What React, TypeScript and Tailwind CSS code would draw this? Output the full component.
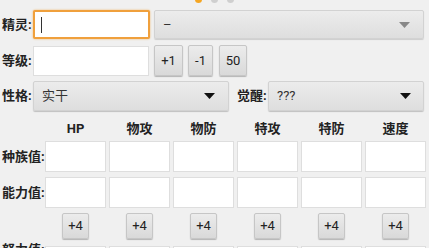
import React from "react";

const font = { fontFamily: 'Roboto, "Noto Sans CJK SC", sans-serif' };

function Caret({ dark }: { dark?: boolean }) {
  return (
    <svg width="11" height="6" viewBox="0 0 11 6" className="shrink-0">
      <path d="M0 0 H11 L5.5 6 Z" fill={dark ? "#111" : "#888"} />
    </svg>
  );
}

function Btn({ label, w, h }: { label: string; w: string; h: string }) {
  return (
    <div
      className={`${w} ${h} flex items-center justify-center rounded-[2px] border border-[#c6c6c6] bg-gradient-to-b from-[#ececec] to-[#d9d9d9] text-[13px] text-[#222] shadow-[0_1px_1px_rgba(0,0,0,0.25)]`}
    >
      {label}
    </div>
  );
}

function Box() {
  return <div className="h-[31px] w-[61px] border border-[#dedede] bg-white" />;
}

const cols = ["HP", "物攻", "物防", "特攻", "特防", "速度"];

export default function App() {
  return (
    <div
      className="relative h-[248px] w-[429px] overflow-hidden bg-[#f0f0f0] text-[#222]"
      style={font}
    >
      <div className="absolute left-[195px] top-[-4px] flex gap-[9px]">
        <div className="h-[7px] w-[7px] rounded-full bg-[#f5a623]" />
        <div className="h-[7px] w-[7px] rounded-full bg-[#cfcfcf]" />
        <div className="h-[7px] w-[7px] rounded-full bg-[#cfcfcf]" />
      </div>

      <div className="flex flex-col pl-[2px] pt-[10px]">
        {/* row 1 */}
        <div className="flex h-[29px] items-center">
          <div className="w-[31px] text-[13px] font-bold">精灵:</div>
          <div className="flex h-[29px] w-[117px] items-center rounded-[2px] border-2 border-[#f0a03c] bg-white pl-[6px] shadow-[0_0_2px_rgba(240,160,60,0.8)]">
            <div className="h-[16px] w-[1px] bg-[#333]" />
          </div>
          <div className="ml-[4px] flex h-[29px] w-[270px] items-center justify-between rounded-[2px] border border-[#d2d2d2] bg-gradient-to-b from-[#ececec] to-[#dedede] pl-[8px] pr-[13px] text-[13px] text-[#333] shadow-[0_1px_1px_rgba(0,0,0,0.15)]">
            <span>–</span>
            <Caret />
          </div>
        </div>

        {/* row 2 */}
        <div className="mt-[6px] flex h-[31px] items-center">
          <div className="w-[31px] text-[13px] font-bold">等级:</div>
          <div className="h-[30px] w-[116px] border border-[#dedede] bg-white" />
          <div className="ml-[5px] flex gap-[5px]">
            <Btn label="+1" w="w-[29px]" h="h-[31px]" />
            <Btn label="-1" w="w-[25px]" h="h-[31px]" />
            <div className="ml-[1px]">
              <Btn label="50" w="w-[28px]" h="h-[31px]" />
            </div>
          </div>
        </div>

        {/* row 3 */}
        <div className="mt-[5px] flex h-[30px] items-center">
          <div className="w-[31px] text-[13px] font-bold">性格:</div>
          <div className="flex h-[30px] w-[196px] items-center justify-between rounded-[2px] border border-[#d2d2d2] bg-gradient-to-b from-[#ececec] to-[#dedede] pl-[8px] pr-[13px] text-[13px] text-[#333] shadow-[0_1px_1px_rgba(0,0,0,0.2)]">
            <span>实干</span>
            <Caret dark />
          </div>
          <div className="ml-[8px] w-[31px] text-[13px] font-bold">觉醒:</div>
          <div className="flex h-[30px] w-[156px] items-center justify-between rounded-[2px] border border-[#d2d2d2] bg-gradient-to-b from-[#ececec] to-[#dedede] pl-[8px] pr-[12px] text-[13px] text-[#333] shadow-[0_1px_1px_rgba(0,0,0,0.2)]">
            <span>???</span>
            <Caret dark />
          </div>
        </div>

        {/* header */}
        <div className="mt-[8px] flex h-[20px] items-center">
          <div className="w-[43px]" />
          <div className="flex gap-[3px]">
            {cols.map((c) => (
              <div key={c} className="w-[61px] text-center text-[13px] font-bold">
                {c}
              </div>
            ))}
          </div>
        </div>

        {/* 种族值 */}
        <div className="mt-[2px] flex items-center">
          <div className="w-[43px] text-[13px] font-bold">种族值:</div>
          <div className="flex gap-[3px]">
            {cols.map((c) => (
              <Box key={c} />
            ))}
          </div>
        </div>

        {/* 能力值 */}
        <div className="mt-[5px] flex items-center">
          <div className="w-[43px] text-[13px] font-bold">能力值:</div>
          <div className="flex gap-[3px]">
            {cols.map((c) => (
              <Box key={c} />
            ))}
          </div>
        </div>

        {/* +4 */}
        <div className="mt-[5px] flex items-center">
          <div className="w-[43px]" />
          <div className="flex gap-[3px]">
            {cols.map((c) => (
              <div key={c} className="flex w-[61px] justify-center">
                <Btn label="+4" w="w-[27px]" h="h-[26px]" />
              </div>
            ))}
          </div>
        </div>

        {/* 努力值 */}
        <div className="mt-[7px] flex items-start">
          <div className="mt-[-6px] w-[43px] text-[13px] font-bold">努力值:</div>
          <div className="flex gap-[3px]">
            {cols.map((c) => (
              <Box key={c} />
            ))}
          </div>
        </div>
      </div>
    </div>
  );
}
